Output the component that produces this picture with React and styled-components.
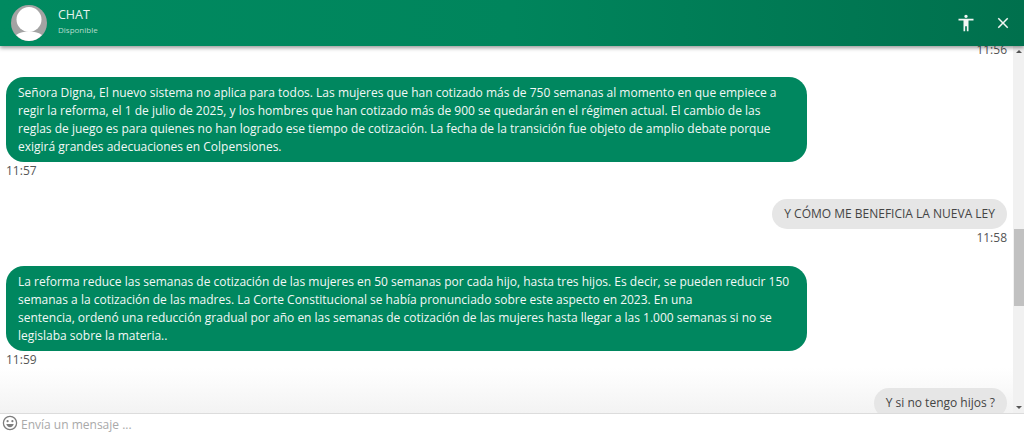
import React from 'react'
import styled, { createGlobalStyle } from 'styled-components'
import { MdAccessibility, MdClose } from 'react-icons/md'

const GlobalStyle = createGlobalStyle`
  html, body {
    margin: 0;
    padding: 0;
    height: 100%;
    overflow: hidden;
    background: #fff;
  }
  #root {
    height: 100%;
  }
`

const messages = [
  {
    id: 1,
    mine: false,
    time: '11:57',
    lines: [
      'Señora Digna, El nuevo sistema no aplica para todos. Las mujeres que han cotizado más de 750 semanas al momento en que empiece a',
      'regir la reforma, el 1 de julio de 2025, y los hombres que han cotizado más de 900 se quedarán en el régimen actual. El cambio de las',
      'reglas de juego es para quienes no han logrado ese tiempo de cotización. La fecha de la transición fue objeto de amplio debate porque',
      'exigirá grandes adecuaciones en Colpensiones.',
    ],
  },
  { id: 2, mine: true, time: '11:58', lines: ['Y CÓMO ME BENEFICIA LA NUEVA LEY'] },
  {
    id: 3,
    mine: false,
    time: '11:59',
    lines: [
      'La reforma reduce las semanas de cotización de las mujeres en 50 semanas por cada hijo, hasta tres hijos. Es decir, se pueden reducir 150',
      'semanas a la cotización de las madres. La Corte Constitucional se había pronunciado sobre este aspecto en 2023. En una',
      'sentencia, ordenó una reducción gradual por año en las semanas de cotización de las mujeres hasta llegar a las 1.000 semanas si no se',
      'legislaba sobre la materia..',
    ],
  },
  { id: 4, mine: true, lines: ['Y si no tengo hijos ?'] },
]

function App() {
  return (
    <Page>
      <GlobalStyle />
      <Header>
        <Avatar viewBox="0 0 38 38">
          <circle cx="19" cy="19" r="18" fill="#a3a3a3" />
          <circle cx="19" cy="15.5" r="12.5" fill="#fff" />
          <path d="M6 31c4-3 8-3.5 13-3.5s9 .5 13 3.5c-3.4 3.8-8 6-13 6s-9.600-2.200-13-6z" fill="#fff" />
        </Avatar>
        <Info>
          <Title>CHAT</Title>
          <Status>Disponible</Status>
        </Info>
        <Actions>
          <MdAccessibility size={20} />
          <MdClose size={18} />
        </Actions>
      </Header>

      <Body>
        <Conversation>
          <TopStamp>11:56</TopStamp>
          {messages.map((msg) => (
            <Message key={msg.id} $mine={msg.mine}>
              <Bubble $mine={msg.mine}>
                {msg.lines.map((line) => (
                  <Line key={line}>{line}</Line>
                ))}
              </Bubble>
              {msg.time && <Stamp>{msg.time}</Stamp>}
            </Message>
          ))}
        </Conversation>
        <Scrollbar>
          <Arrow $up />
          <Track>
            <Thumb />
          </Track>
          <Arrow />
        </Scrollbar>
      </Body>

      <InputBar>
        <Smile viewBox="0 0 16 16">
          <circle cx="8" cy="8" r="6.600" fill="none" stroke="#7d7d7d" strokeWidth="1.300" />
          <circle cx="5.600" cy="6.200" r="1.100" fill="#7d7d7d" />
          <circle cx="10.400" cy="6.200" r="1.100" fill="#7d7d7d" />
          <path d="M4.300 9h7.400c-.4 2-1.900 3.200-3.700 3.200S4.700 11 4.300 9z" fill="#7d7d7d" />
        </Smile>
        <Placeholder>Envía un mensaje ...</Placeholder>
      </InputBar>
    </Page>
  )
}

export default App

const Page = styled.div`
  height: 446px;
  width: 1024px;
  display: flex;
  flex-direction: column;
  overflow: hidden;
  font-family: "Open Sans", "Liberation Sans", sans-serif;
`

const Header = styled.header`
  flex: 0 0 46px;
  display: flex;
  align-items: center;
  padding: 0 10px;
  box-sizing: border-box;
  background: linear-gradient(90deg, #008a60 0%, #00855c 50%, #00704d 100%);
  box-shadow: 0 2px 4px rgba(0, 0, 0, 0.4);
  position: relative;
  z-index: 2;
`

const Avatar = styled.svg`
  width: 38px;
  height: 38px;
`

const Info = styled.div`
  margin: 0 0 5px 10px;
  display: flex;
  flex-direction: column;
  gap: 1px;
`

const Title = styled.span`
  color: #e6f3ee;
  font-size: 12.500px;
  line-height: 16px;
`

const Status = styled.span`
  color: #b5dccd;
  font-size: 8px;
  line-height: 11px;
`

const Actions = styled.div`
  margin-left: auto;
  display: flex;
  align-items: center;
  gap: 18px;
  color: #f1f6f4;
  padding-right: 2px;
`

const Body = styled.main`
  flex: 0 0 367px;
  display: flex;
  min-height: 0;
`

const Conversation = styled.div`
  flex: 1;
  overflow: hidden;
  display: flex;
  flex-direction: column;
  padding: 0 6px;
  background: linear-gradient(#fff, #f3f3f3) bottom / 100% 45px no-repeat;
`

const TopStamp = styled.div`
  text-align: right;
  color: #555;
  font-size: 12px;
  line-height: 16px;
  margin: -4px 0 19px;
`

const Message = styled.div`
  display: flex;
  flex-direction: column;
  align-items: ${(p) => (p.$mine ? 'flex-end' : 'flex-start')};
  margin-bottom: 20px;
  flex-shrink: 0;
`

const Bubble = styled.div`
  box-sizing: border-box;
  background: ${(p) => (p.$mine ? '#e6e6e6' : '#00875f')};
  color: ${(p) => (p.$mine ? '#444' : '#f3f8f6')};
  border-radius: ${(p) => (p.$mine ? '15px' : '18px')};
  width: ${(p) => (p.$mine ? 'auto' : '801px')};
  padding: ${(p) => (p.$mine ? '6px 12px' : '7px 12px 6px')};
  font-size: 12px;
  line-height: 18px;
`

const Line = styled.div`
  white-space: nowrap;
`

const Stamp = styled.span`
  color: #555;
  font-size: 12px;
  line-height: 16px;
  margin-top: 1px;
`

const Scrollbar = styled.div`
  flex: 0 0 11px;
  display: flex;
  flex-direction: column;
  background: #f1f1f1;
`

const Track = styled.div`
  flex: 1;
  padding: 172px 0 0 1px;
`

const Thumb = styled.div`
  height: 77px;
  background: #c1c1c1;
`

const Arrow = styled.div`
  flex: 0 0 11px;
  display: flex;
  align-items: center;
  justify-content: center;
  &::before {
    content: '';
    border-left: 3px solid transparent;
    border-right: 3px solid transparent;
    ${(p) => (p.$up ? 'border-bottom: 3px solid #555;' : 'border-top: 3px solid #555;')}
  }
`

const InputBar = styled.footer`
  flex: 1;
  display: flex;
  align-items: flex-start;
  gap: 3px;
  padding: 1px 0 0 2px;
  border-top: 1px solid #dcdcdc;
  background: #fff;
`

const Smile = styled.svg`
  width: 16px;
  height: 16px;
`

const Placeholder = styled.span`
  color: #a9a9a9;
  font-size: 12px;
  line-height: 20px;
`
